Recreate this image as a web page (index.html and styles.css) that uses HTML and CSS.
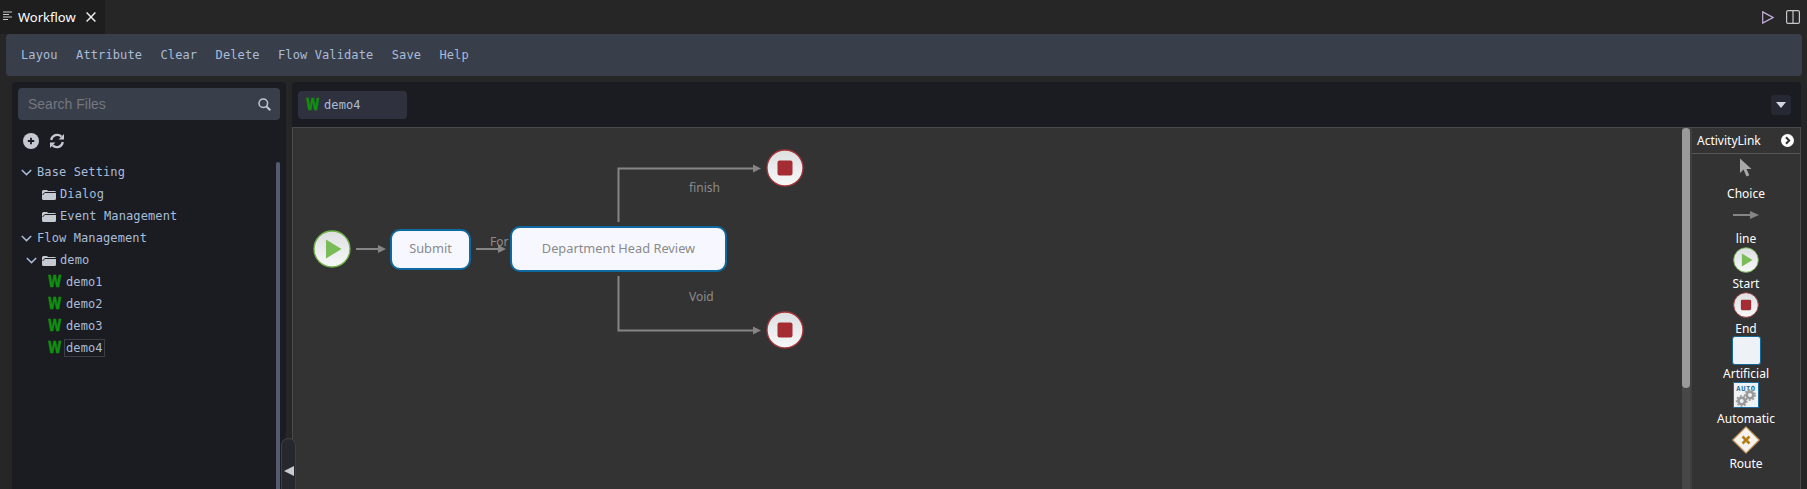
FILE: index.html
```html
<!DOCTYPE html>
<html lang="en">
<head>
<meta charset="utf-8">
<title>Workflow</title>
<link rel="stylesheet" href="styles.css">
</head>
<body>
<svg class="defs" width="0" height="0" aria-hidden="true">
  <defs>
    <linearGradient id="disc" x1="0" y1="0" x2="0" y2="1">
      <stop offset="0" stop-color="#dcdee0"/>
      <stop offset="1" stop-color="#f7f9f9"/>
    </linearGradient>
    <symbol id="start" viewBox="0 0 38 38">
      <circle cx="19" cy="19" r="18" fill="url(#disc)" stroke="#6fb348" stroke-width="1.3"/>
      <path d="M13 9.500 28.500 19 13 28.500Z" fill="#7abd58"/>
    </symbol>
    <symbol id="end" viewBox="0 0 38 38">
      <circle cx="19" cy="19" r="18" fill="url(#disc)" stroke="#a5343a" stroke-width="1.3"/>
      <rect x="11.500" y="11.500" width="15" height="15" rx="2" fill="#a52c33"/>
    </symbol>
    <symbol id="folder" viewBox="0 0 14 11">
      <path d="M0 2.500Q0 1 1.500 1H5L6 2H12.500Q14 2 14 3.200V9.500Q14 11 12.500 11H1.500Q0 11 0 9.500Z" fill="#c5c9d2"/>
      <path d="M.6 6 2.800 3.500H14" fill="none" stroke="#1a1c22"/>
    </symbol>
    <symbol id="chev" viewBox="0 0 11 7">
      <path d="M.8 1 5.500 5.600 10.200 1" fill="none" stroke="#a8bcd8" stroke-width="1.500"/>
    </symbol>
  </defs>
</svg>

<header class="tabbar">
  <div class="tab">
    <svg class="tab-icon" width="10" height="10" viewBox="0 0 10 10"><path d="M0 1h9M0 3.500h6M0 6h9M0 8.500h5" stroke="#c8c8c8" stroke-width="1.200"/></svg>
    <span class="tab-title">Workflow</span>
    <svg class="tab-close" width="10" height="10" viewBox="0 0 10 10"><path d="M.6.6l8.800 8.800M9.400.6.600 9.400" stroke="#f4f4f4" stroke-width="1.400"/></svg>
  </div>
  <div class="tab-actions">
    <svg width="12" height="13" viewBox="0 0 12 13"><path d="M.7.9 11 6.500.7 12.100Z" fill="none" stroke="#c9b0dc" stroke-width="1.200"/></svg>
    <svg width="14" height="14" viewBox="0 0 14 14"><rect x=".6" y=".6" width="12.800" height="12.800" rx="1.500" fill="none" stroke="#c6c6cc" stroke-width="1.200"/><path d="M7 0v14" stroke="#c6c6cc" stroke-width="1.200"/></svg>
  </div>
</header>

<nav class="toolbar">
  <span class="tool">Layou</span>
  <span class="tool">Attribute</span>
  <span class="tool">Clear</span>
  <span class="tool">Delete</span>
  <span class="tool">Flow Validate</span>
  <span class="tool">Save</span>
  <span class="tool">Help</span>
</nav>

<main class="workspace">
  <aside class="sidebar">
    <div class="search">
      <input class="search-input" type="text" placeholder="Search Files">
      <svg width="13" height="13" viewBox="0 0 13 13"><circle cx="5.300" cy="5.300" r="4.300" fill="none" stroke="#c5c8d0" stroke-width="1.500"/><path d="M8.300 8.300l4 4" stroke="#c5c8d0" stroke-width="2"/></svg>
    </div>
    <div class="side-actions">
      <svg width="16" height="16" viewBox="0 0 16 16"><circle cx="8" cy="8" r="8" fill="#c5c8d0"/><path d="M8 4.800v6.400M4.800 8h6.400" stroke="#1a1c22" stroke-width="1.800"/></svg>
      <svg width="16" height="16" viewBox="0 0 16 16"><path d="M2.200 7A6 6 0 0 1 12.400 3.600M13.800 9a6 6 0 0 1-10.200 3.400" fill="none" stroke="#c5c8d0" stroke-width="2.200"/><path d="M15 1v5.400H9.600ZM1 15V9.600h5.400Z" fill="#c5c8d0"/></svg>
    </div>
    <ul class="tree">
      <li class="row"><svg class="chev"><use href="#chev"/></svg><span>Base Setting</span></li>
      <li class="row indent-1"><svg class="folder"><use href="#folder"/></svg><span>Dialog</span></li>
      <li class="row indent-1"><svg class="folder"><use href="#folder"/></svg><span>Event Management</span></li>
      <li class="row"><svg class="chev"><use href="#chev"/></svg><span>Flow Management</span></li>
      <li class="row indent-2"><svg class="chev"><use href="#chev"/></svg><svg class="folder"><use href="#folder"/></svg><span>demo</span></li>
      <li class="row indent-3"><b class="wf">W</b><span>demo1</span></li>
      <li class="row indent-3"><b class="wf">W</b><span>demo2</span></li>
      <li class="row indent-3"><b class="wf">W</b><span>demo3</span></li>
      <li class="row indent-3"><b class="wf">W</b><span class="current">demo4</span></li>
    </ul>
    <div class="side-scroll"></div>
  </aside>

  <section class="editor">
    <div class="doc-tabs">
      <div class="doc-tab"><b class="wf">W</b><span>demo4</span></div>
      <button class="doc-menu" type="button" aria-label="More"><svg width="10" height="6" viewBox="0 0 10 6"><path d="M0 0h10L5 6Z" fill="#d5d7de"/></svg></button>
    </div>
    <div class="stage">
      <div class="canvas">
        <svg class="edges" width="1170" height="361" viewBox="0 0 1170 361">
          <g fill="none" stroke="#858585" stroke-width="2">
            <path d="M63 121H87"/>
            <path d="M183 121H207"/>
            <path d="M325.500 94V40.500H462"/>
            <path d="M325.500 148V202.500H462"/>
          </g>
          <g fill="#858585">
            <path d="M85 117 93 121 85 125Z"/>
            <path d="M205 117 213 121 205 125Z"/>
            <path d="M460 36.500 468 40.500 460 44.500Z"/>
            <path d="M460 198.500 468 202.500 460 206.500Z"/>
          </g>
        </svg>
        <svg class="pin pin-start"><use href="#start"/></svg>
        <svg class="pin pin-end-a"><use href="#end"/></svg>
        <svg class="pin pin-end-b"><use href="#end"/></svg>
        <span class="edge-label label-for">For</span>
        <span class="edge-label label-finish">finish</span>
        <span class="edge-label label-void">Void</span>
        <div class="node node-submit">Submit</div>
        <div class="node node-review">Department Head Review</div>
      </div>
      <div class="canvas-scroll"><div class="canvas-thumb"></div></div>
      <aside class="palette">
        <div class="palette-head"><span>ActivityLink</span>
          <svg width="13" height="13" viewBox="0 0 13 13"><circle cx="6.500" cy="6.500" r="6.500" fill="#fff"/><path d="M5 3.200 8.200 6.500 5 9.800" fill="none" stroke="#333" stroke-width="2"/></svg>
        </div>
        <div class="palette-list">
          <div class="pal-item"><div class="pal-icon"><svg class="pointer" width="13" height="19" viewBox="0 0 13 19"><path d="M1 .500V15L4.500 11.500 7.500 18.500 10.300 17.300 7.500 11H12.500Z" fill="#a8a8a8"/></svg></div><span class="pal-label">Choice</span></div>
          <div class="pal-item"><div class="pal-icon"><svg width="26" height="10" viewBox="0 0 26 10"><path d="M0 5H19" stroke="#858585" stroke-width="2"/><path d="M17 1 26 5 17 9Z" fill="#858585"/></svg></div><span class="pal-label">line</span></div>
          <div class="pal-item"><div class="pal-icon"><svg class="pal-disc"><use href="#start"/></svg></div><span class="pal-label">Start</span></div>
          <div class="pal-item"><div class="pal-icon"><svg class="pal-disc"><use href="#end"/></svg></div><span class="pal-label">End</span></div>
          <div class="pal-item"><div class="pal-icon"><div class="pal-task"></div></div><span class="pal-label">Artificial</span></div>
          <div class="pal-item"><div class="pal-icon">
            <svg width="26" height="26" viewBox="0 0 26 26">
              <rect x=".5" y=".5" width="25" height="25" fill="#eef2f5" stroke="#1c6b9c"/>
              <text x="13" y="8.500" class="auto-text">AUTO</text>
              <g fill="none" stroke="#999">
                <circle cx="17" cy="13" r="3.300" stroke-width="2.600"/>
                <circle cx="17" cy="13" r="5.100" stroke-width="1.600" stroke-dasharray="1.800 1.800"/>
                <circle cx="8.700" cy="19" r="3.300" stroke-width="2.600"/>
                <circle cx="8.700" cy="19" r="5.100" stroke-width="1.600" stroke-dasharray="1.800 1.800"/>
              </g>
            </svg></div><span class="pal-label">Automatic</span></div>
          <div class="pal-item"><div class="pal-icon">
            <svg width="28" height="28" viewBox="0 0 28 28"><path d="M14 .8 27.200 14 14 27.200 .8 14Z" fill="#f4f3ef" stroke="#c9975b" stroke-width="1.200" stroke-linejoin="round"/><path d="M10.500 10.500l7 7M17.500 10.500l-7 7" stroke="#b87d14" stroke-width="2.600"/></svg></div><span class="pal-label">Route</span></div>
        </div>
      </aside>
    </div>
  </section>
  <button class="collapse" type="button" aria-label="Collapse"><svg width="10" height="10" viewBox="0 0 10 10"><path d="M10 0V10L0 5Z" fill="#c8cbd3"/></svg></button>
</main>
</body>
</html>
```

FILE: styles.css
```css
* { box-sizing: border-box; }
html, body { margin: 0; height: 100%; }
body {
  width: 1807px;
  height: 489px;
  overflow: hidden;
  display: flex;
  flex-direction: column;
  background: #262626;
  font-family: "Noto Sans", sans-serif;
  color: #fff;
}
.defs { position: absolute; }

.tabbar { height: 34px; flex: none; display: flex; justify-content: space-between; align-items: stretch; background: #262626; }
.tab { width: 105px; display: flex; align-items: center; background: #1e1e1e; padding-left: 3px; }
.tab-icon { margin-right: 5px; margin-top: -2px; }
.tab-title { font-size: 13px; width: 68px; }
.tab-actions { display: flex; align-items: center; gap: 12px; padding-right: 7px; }

.toolbar {
  height: 42px; flex: none;
  margin: 0 5px 0 6px;
  padding-left: 15px;
  display: flex; align-items: center; gap: 18.400px;
  background: #393e4b;
  border-radius: 4px;
  font: 12px "DejaVu Sans Mono", monospace;
  letter-spacing: .11px;
  color: #a9bcd8;
}

.workspace { flex: 1; min-height: 0; display: flex; gap: 6px; padding: 6px 6px 0 12px; position: relative; }

.sidebar { width: 274px; flex: none; position: relative; background: #1a1c22; border-radius: 4px 4px 0 0; padding: 6px; }
.search { height: 32px; width: 262px; display: flex; align-items: center; justify-content: space-between; padding: 0 9px 0 10px; background: #393e4b; border-radius: 4px; }
.search-input { flex: 1; min-width: 0; border: 0; padding: 0; outline: 0; background: transparent; font: 14px "Liberation Sans", sans-serif; color: #ddd; }
.search-input::placeholder { color: #74777f; opacity: 1; }
.side-actions { display: flex; align-items: center; gap: 10px; height: 16px; margin: 13px 0 0 5px; }
.tree { list-style: none; margin: 12px 0 0; padding: 0; font: 12px "DejaVu Sans Mono", monospace; letter-spacing: .11px; color: #a9bcd8; }
.row { height: 22px; display: flex; align-items: center; padding-left: 3px; }
.row.indent-1 { padding-left: 24px; }
.row.indent-2 { padding-left: 8px; }
.row.indent-3 { padding-left: 30px; }
.chev { width: 11px; height: 7px; margin-right: 5px; flex: none; }
.folder { width: 14px; height: 11px; margin-right: 4px; flex: none; }
.wf { display: inline-block; flex: none; width: 18px; font: 700 16px/1 "DejaVu Sans", sans-serif; color: #0f910f; -webkit-text-stroke: .5px #0f910f; transform: scaleX(.76); transform-origin: left center; }
.current { outline: 1px solid #3c3f48; outline-offset: 1px; }
.side-scroll { position: absolute; right: 6px; top: 80px; bottom: 0; width: 4px; background: #565a70; border-radius: 2px 2px 0 0; }

.editor { flex: 1; min-width: 0; display: flex; flex-direction: column; background: #1a1c22; border-radius: 4px 4px 0 0; }
.doc-tabs { height: 45px; flex: none; display: flex; justify-content: space-between; align-items: flex-start; padding: 9px 10px 0 6px; }
.doc-tab { width: 109px; height: 28px; display: flex; align-items: center; padding-left: 8px; background: #2f323e; border-radius: 4px; font: 12px "DejaVu Sans Mono", monospace; letter-spacing: .11px; color: #a9bcd8; }
.doc-menu { width: 20px; height: 20px; margin-top: 4px; border: 0; padding: 0; display: flex; align-items: center; justify-content: center; background: #262833; border-radius: 3px; }

.stage { flex: 1; min-height: 0; display: flex; background: #333; border: 1px solid #4a4a4a; border-bottom: 0; }
.canvas { flex: 1; min-width: 0; position: relative; overflow: hidden; }
.edges { position: absolute; left: 0; top: 0; }
.pin { position: absolute; width: 38px; height: 38px; }
.pin-start { left: 20px; top: 102px; }
.pin-end-a { left: 473px; top: 21px; }
.pin-end-b { left: 473px; top: 183px; }
.edge-label { position: absolute; font-size: 12px; line-height: 16px; color: #8c8c8c; white-space: nowrap; }
.label-for { left: 197px; top: 106px; }
.label-finish { left: 396px; top: 52px; }
.label-void { left: 396px; top: 161px; }
.node { position: absolute; display: flex; align-items: center; justify-content: center; background: #f7f8ff; border: 2px solid #0e6a9e; color: #8a8a8a; font-size: 12.800px; padding-bottom: 3px; }
.node-submit { left: 97px; top: 101px; width: 81px; height: 41px; border-radius: 10px; }
.node-review { left: 217px; top: 98px; width: 217px; height: 46px; border-radius: 10px; }

.canvas-scroll { width: 8px; flex: none; background: #474747; }
.canvas-thumb { height: 260px; background: #9a9a9a; border-radius: 4px; }

.palette { width: 110px; flex: none; background: #333; border-left: 2px solid #3f3f3f; color: #fff; font-size: 12px; }
.palette-head { height: 26px; display: flex; align-items: center; justify-content: space-between; padding: 0 6px 0 5px; border-bottom: 1px solid #555; }
.palette-list { padding-top: 5px; display: flex; flex-direction: column; }
.pal-item { height: 45px; display: flex; flex-direction: column; align-items: center; }
.pal-icon { height: 22px; flex: none; display: flex; align-items: center; justify-content: center; }
.pal-label { height: 23px; padding-top: 3px; line-height: 20px; }
.pointer { margin-top: -6px; margin-left: -2px; }
.pal-disc { width: 26px; height: 26px; flex: none; }
.pal-task { width: 29px; height: 29px; flex: none; background: #eef2f6; border: 1px solid #12699a; border-radius: 3px; }
.auto-text { font: 700 7px "DejaVu Sans Mono", monospace; letter-spacing: .6px; text-anchor: middle; fill: #1c6b9c; }

.collapse { position: absolute; left: 281px; bottom: -1px; top: 362px; width: 15px; border: 1px solid #3d3f47; border-bottom: 0; border-radius: 7px 7px 0 0; padding: 27px 0 0 1px; background: #26282e; display: flex; justify-content: center; align-items: flex-start; }
```
